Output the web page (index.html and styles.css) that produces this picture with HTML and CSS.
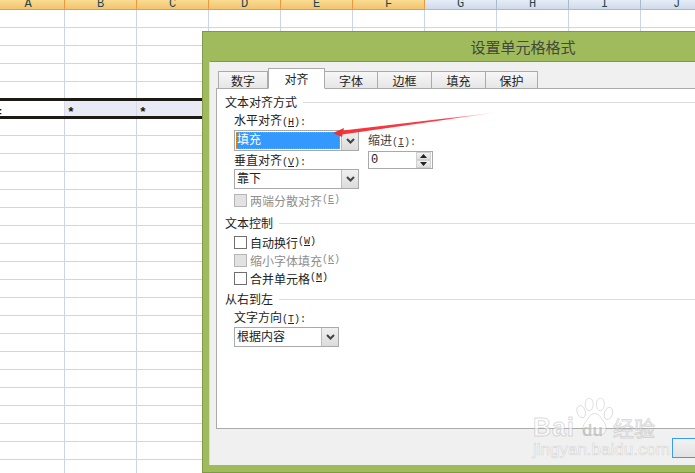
FILE: index.html
```html
<!DOCTYPE html>
<html lang="zh">
<head>
<meta charset="utf-8">
<title>设置单元格格式</title>
<link rel="stylesheet" href="styles.css">
</head>
<body>
<div class="page">
  <div class="colheads">
    <div class="ch first sel">A</div><div class="ch sel">B</div><div class="ch sel">C</div><div class="ch sel">D</div><div class="ch sel">E</div><div class="ch sel">F</div><div class="ch">G</div><div class="ch">H</div><div class="ch">I</div><div class="ch">J</div>
  </div>
  <div class="grid">
    <div class="band">
      <div class="cell first">=</div><div class="cell filled">*</div><div class="cell filled">*</div><div class="cell filled"></div>
    </div>
  </div>

  <div class="dialog">
    <div class="titlebar">设置单元格格式</div>
    <div class="body">
      <div class="tabs">
        <div class="tab w50">数字</div>
        <div class="tab active">对齐</div>
        <div class="tab w53">字体</div>
        <div class="tab w54">边框</div>
        <div class="tab w54">填充</div>
        <div class="tab w52">保护</div>
      </div>
      <div class="panel">
        <div class="legend"><span>文本对齐方式</span><i></i></div>
        <div class="label l-h">水平对齐<span class="key">(<u>H</u>):</span></div>
        <div class="align-row">
          <div class="combo wide focus">
            <div class="value"><span class="focus-box">填充</span></div>
            <div class="drop"><svg width="9" height="6" viewBox="0 0 9 6"><path d="M1 1l3.500 3.500L8 1" fill="none" stroke="#444" stroke-width="2"/></svg></div>
          </div>
          <div class="indent">
            <div class="label muted">缩进<span class="key">(<u>I</u>):</span></div>
            <div class="spin">
              <div class="spin-value">0</div>
              <div class="spin-btns">
                <div class="spin-btn"><svg width="7" height="4" viewBox="0 0 7 4"><path d="M3.500 0L7 4H0z" fill="#222"/></svg></div>
                <div class="spin-btn"><svg width="7" height="4" viewBox="0 0 7 4"><path d="M0 0h7L3.500 4z" fill="#222"/></svg></div>
              </div>
            </div>
          </div>
        </div>
        <div class="label l-v">垂直对齐<span class="key">(<u>V</u>):</span></div>
        <div class="combo wide">
          <div class="value">靠下</div>
          <div class="drop"><svg width="9" height="6" viewBox="0 0 9 6"><path d="M1 1l3.500 3.500L8 1" fill="none" stroke="#444" stroke-width="2"/></svg></div>
        </div>
        <div class="check disabled c-just"><b></b>两端分散对齐<span class="key">(<u>E</u>)</span></div>

        <div class="legend l2"><span>文本控制</span><i></i></div>
        <div class="check c-wrap"><b></b>自动换行<span class="key">(<u>W</u>)</span></div>
        <div class="check disabled"><b></b>缩小字体填充<span class="key">(<u>K</u>)</span></div>
        <div class="check"><b></b>合并单元格<span class="key">(<u>M</u>)</span></div>

        <div class="legend l3"><span>从右到左</span><i></i></div>
        <div class="label l-t">文字方向<span class="key">(<u>T</u>):</span></div>
        <div class="combo narrow">
          <div class="value">根据内容</div>
          <div class="drop"><svg width="9" height="6" viewBox="0 0 9 6"><path d="M1 1l3.500 3.500L8 1" fill="none" stroke="#444" stroke-width="2"/></svg></div>
        </div>
      </div>
      <div class="footer"><div class="okbtn"></div></div>
    </div>
  </div>

  <svg class="arrow" width="180" height="36" viewBox="330 108 180 36">
    <defs>
      <linearGradient id="fade" x1="340" y1="0" x2="500" y2="0" gradientUnits="userSpaceOnUse">
        <stop offset="0" stop-color="#f5333a"/>
        <stop offset=".65" stop-color="#ff3b45"/>
        <stop offset="1" stop-color="#ff8a90" stop-opacity=".1"/>
      </linearGradient>
    </defs>
    <path d="M500 112L343 130.500 342 134.500z" fill="url(#fade)"/>
    <path d="M333 133L344 128 343 132.500 342 137z" fill="#ee2f33"/>
  </svg>

  <div class="watermark">
    <svg class="paw" width="40" height="40" viewBox="0 0 50 44" preserveAspectRatio="none">
      <g fill="rgba(255,255,255,.5)" stroke="rgba(150,150,150,.35)">
        <ellipse cx="9" cy="15" rx="5" ry="7" transform="rotate(-25 9 15)"/>
        <ellipse cx="19" cy="7" rx="5" ry="7"/>
        <ellipse cx="33" cy="7" rx="5" ry="7"/>
        <ellipse cx="43" cy="17" rx="5" ry="7" transform="rotate(25 43 17)"/>
        <path d="M26 17c6 0 8 6 12 10 4 5 2 14-6 14-3 0-4-1-6-1s-3 1-7 1c-8 0-10-9-5-14 4-4 6-10 12-10z"/>
      </g>
    </svg>
    <div class="wm-line">
      <span class="wm-bai">Bai</span><span class="wm-du">du</span><span class="wm-jy">经验</span>
    </div>
    <div class="wm-url">jingyan.baidu.com</div>
  </div>
</div>
</body>
</html>
```

FILE: styles.css
```css
* { box-sizing: border-box; }
html, body { margin: 0; padding: 0; }
body { background: #fff; font-family: "Noto Sans CJK SC", "Liberation Sans", sans-serif; font-size: 12px; color: #222; }
.page { position: relative; width: 695px; height: 473px; overflow: hidden; display: flex; flex-direction: column; }

/* sheet */
.colheads { display: flex; height: 10px; flex: none; overflow: hidden; }
.ch { width: 72px; flex: none; height: 10px; border-right: 1px solid #a9bacf; border-bottom: 1px solid #a9bacf; background: linear-gradient(#e6edf7, #cfdaea); font: 12px/1 "Liberation Mono", monospace; color: #24484f; text-align: center; line-height: 8px; }
.ch.first { width: 65px; padding-right: 8px; }
.ch.sel { border-color: #f2983c; background: linear-gradient(#f9dc94, #f3c36f); }
.grid { flex: 1; padding-top: 88px;
  background-image: linear-gradient(to right, transparent 71px, #cbd5e7 71px), linear-gradient(to bottom, transparent 17px, #cdd6e5 17px);
  background-size: 72px 100%, 100% 18px;
  background-position: -7px 0, 0 0; }
.band { display: flex; height: 21px; border-top: 3px solid #1d1a16; border-bottom: 3px solid #1d1a16; }
.cell { width: 72px; flex: none; border-right: 1px solid #d6dbe9; font: bold 13px/23px "Liberation Mono", monospace; color: #111; padding-left: 2px; background: #fff; }
.cell.first { width: 65px; padding-left: 0; text-indent: -6px; overflow: hidden; }
.cell.filled { background: #e8ebf6; }

/* dialog */
.dialog { position: absolute; left: 202px; top: 31px; width: 642px; height: 442px; background: #9fbb5c; border: 1px solid #7e9a48; padding: 0 6px 7px; display: flex; flex-direction: column; }
.titlebar { height: 29px; flex: none; text-align: center; font-size: 15px; line-height: 30px; color: #43483a; }
.body { flex: 1; background: #f0f0f0; border-top: 1px solid #7e9a48; border-left: 1px solid #d8d8d8; padding: 7px 6px 0; display: flex; flex-direction: column; }

.tabs { display: flex; height: 20px; padding-left: 2px; align-items: flex-end; flex: none; position: relative; z-index: 1; margin-bottom: -1px; }
.tab { height: 18px; border: 1px solid #ababab; border-left-width: 0; background: linear-gradient(#f7f7f7, #e6e6e6); text-align: center; line-height: 17px; font-size: 12px; }
.tab:first-child { border-left-width: 1px; }
.w50 { width: 50px; }
.w52 { width: 52px; }
.w53 { width: 53px; }
.w54 { width: 54px; }
.tab.active { width: 57px; height: 21px; background: #fff; border-bottom-color: #fff; border-left-width: 1px; line-height: 20px; }

.panel { height: 341px; flex: none; background: #fff; border: 1px solid #ababab; padding: 4px 0 0 8px; display: flex; flex-direction: column; align-items: flex-start; }
.legend { display: flex; align-items: center; width: 100%; height: 16px; flex: none; gap: 6px; color: #222; }
.legend i { flex: 1; height: 1px; background: #dedede; margin-top: 2px; }
.l2 { margin-top: 5px; }
.l3 { margin-top: 3px; }
.label { height: 16px; line-height: 16px; margin-left: 9px; white-space: nowrap; flex: none; }
.l-h { margin-top: 3px; margin-bottom: 2px; }
.l-v { margin-top: 1px; margin-bottom: 1px; }
.l-t { margin-top: 3px; margin-bottom: 2px; }
.key { font: 10px/16px "Liberation Mono", monospace; }
.muted { color: #444; margin-left: 0; }

.align-row { display: flex; align-items: flex-start; gap: 9px; margin-left: 9px; height: 21px; flex: none; }
.indent { display: flex; flex-direction: column; }
.indent .label { height: 21px; line-height: 20px; }
.combo { height: 20px; display: flex; border: 1px solid #a9a9a9; background: #fff; flex: none; margin-left: 9px; }
.align-row .combo { margin-left: 0; height: 21px; }
.wide { width: 125px; }
.narrow { width: 105px; }
.value { flex: 1; padding: 0 0 0 2px; line-height: 16px; font-size: 12px; }
.focus .value { padding: 1px; }
.focus-box { display: block; height: 17px; background: #3399ff; color: #fff; outline: 1px dotted #e88f2a; outline-offset: -1px; line-height: 14px; padding-left: 1px; }
.drop { width: 17px; flex: none; display: flex; align-items: center; justify-content: center; background: linear-gradient(#f0f0f0, #dcdcdc); border-left: 1px solid #bdbdbd; }
.spin { width: 65px; height: 18px; border: 1px solid #a9a9a9; display: flex; background: #fff; }
.spin-value { flex: 1; padding-left: 2px; font: 12px/16px "Liberation Mono", monospace; }
.spin-btns { width: 15px; display: flex; flex-direction: column; margin-right: 1px; }
.spin-btn { flex: 1; display: flex; align-items: center; justify-content: center; background: linear-gradient(#f2f2f2, #dedede); border: 1px solid #d0d0d0; }

.check { display: flex; align-items: center; height: 18px; margin-left: 9px; white-space: nowrap; flex: none; }
.check b { width: 13px; height: 13px; border: 1px solid #6f6f6f; background: #fff; margin-right: 3px; flex: none; }
.check.disabled { color: #8e8e8e; }
.check.disabled b { border-color: #b5b5b5; background: #e2e2e2; }
.c-just { margin-top: 2px; }
.c-wrap { margin-top: 3px; }

.footer { flex: 1; display: flex; padding: 9px 0 0 456px; }
.okbtn { width: 80px; height: 20px; border: 1px solid #3a9bf5; background: linear-gradient(#f2f2f2, #e2e2e2); }

/* overlays */
.arrow { position: absolute; left: 330px; top: 108px; }
.watermark { position: absolute; left: 533px; top: 398px; width: 128px; height: 60px; }
.paw { position: absolute; left: 41px; top: 0; }
.wm-line { position: absolute; left: 0; top: 14px; white-space: nowrap; display: flex; align-items: baseline; }
.wm-bai { font: bold 25px/30px "Liberation Sans", sans-serif; color: rgba(255,255,255,.6); -webkit-text-stroke: 1px rgba(150,150,150,.35); width: 49px; letter-spacing: 1px; }
.wm-du { font: bold 17px/30px "Liberation Sans", sans-serif; color: rgba(160,160,160,.5); width: 31px; }
.wm-jy { font-size: 21px; line-height: 30px; color: rgba(255,255,255,.6); -webkit-text-stroke: 1px rgba(150,150,150,.35); }
.wm-url { position: absolute; left: 0; top: 43px; font: 17px/18px "Liberation Sans", sans-serif; color: rgba(255,255,255,.6); -webkit-text-stroke: .6px rgba(150,150,150,.35); white-space: nowrap; }
```
